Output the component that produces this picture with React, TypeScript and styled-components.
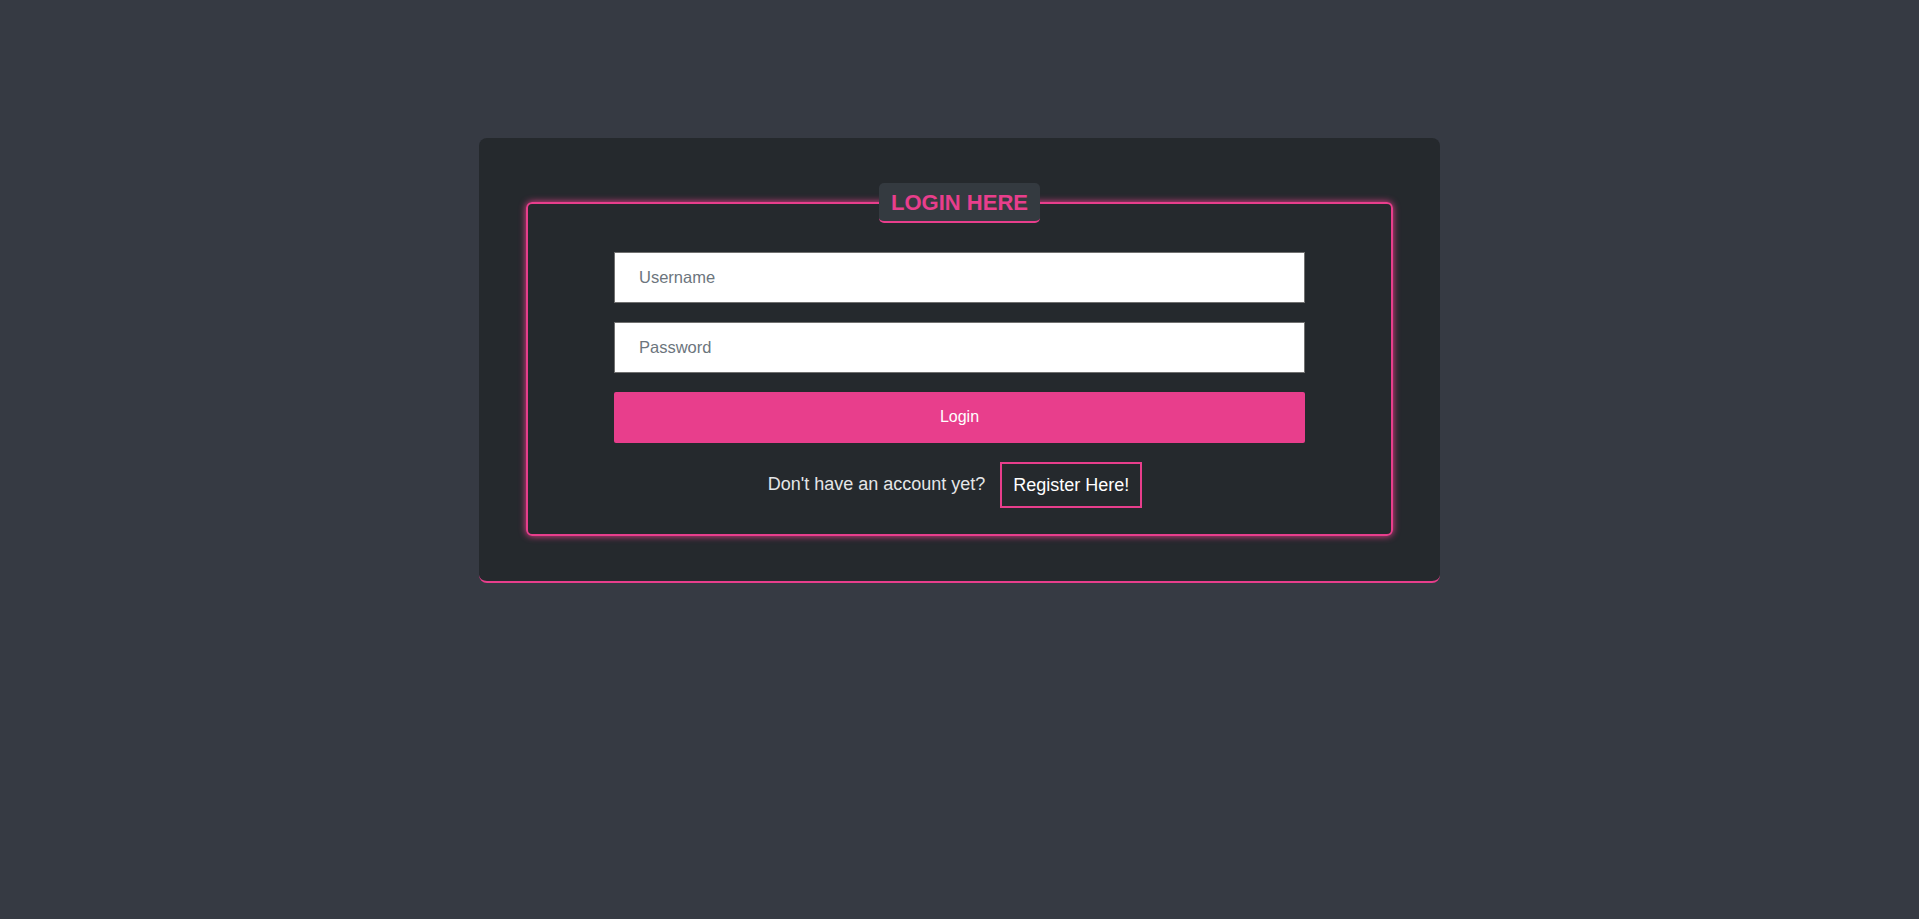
import React from "react";
import styled, { createGlobalStyle } from "styled-components";

const pink = "#e83e8c";

const GlobalStyle = createGlobalStyle`
  html, body {
    margin: 0;
    padding: 0;
    background: #363a43;
    font-family: "Liberation Sans", Arial, sans-serif;
  }
  * {
    box-sizing: border-box;
  }
`;

const Page = styled.main`
  min-height: 100vh;
  padding-top: 15vh;
`;

const Card = styled.section`
  width: 961px;
  margin: 0 auto;
  padding: 45px;
  background: #25292d;
  border-radius: 8px;
  border-bottom: 2px solid ${pink};
`;

const Fieldset = styled.fieldset`
  margin: 0 2px;
  padding: 29px 0 26px;
  border: 2px solid ${pink};
  border-radius: 6px;
  box-shadow: 0 0 7px ${pink};
  min-width: 0;
`;

const Legend = styled.legend`
  margin: 0 auto;
  padding: 7px 12px 6px;
  background: #343a40;
  border-bottom: 2px solid ${pink};
  border-radius: 5px;
  color: ${pink};
  font-size: 22px;
  font-weight: 700;
  line-height: 25px;
`;

const Form = styled.form`
  width: 691px;
  margin: 0 auto;
  display: flex;
  flex-direction: column;
  gap: 19px;
`;

const Input = styled.input`
  height: 51px;
  width: 100%;
  padding: 0 24px;
  border: 1px solid #707070;
  border-radius: 0;
  background: #fff;
  font-family: inherit;
  font-size: 16.5px;
  color: #333;
  outline: none;

  &::placeholder {
    color: #6c757d;
  }
`;

const SubmitButton = styled.button`
  height: 51px;
  width: 100%;
  border: none;
  border-radius: 2px;
  background: ${pink};
  color: #fff;
  font-family: inherit;
  font-size: 16px;
  cursor: pointer;
`;

const RegisterRow = styled.div`
  display: flex;
  align-items: center;
  justify-content: center;
  gap: 15px;
  font-size: 18px;
  color: #e4e6e8;
`;

const RegisterLink = styled.a`
  margin-right: 9px;
  padding: 10px 11px;
  border: 2px solid ${pink};
  color: #fff;
  text-decoration: none;
  line-height: 22px;
`;

export default function App() {
  return (
    <>
      <GlobalStyle />
      <Page>
        <Card>
          <Fieldset>
            <Legend>LOGIN HERE</Legend>
            <Form onSubmit={(e) => e.preventDefault()}>
              <Input type="text" placeholder="Username" />
              <Input type="password" placeholder="Password" />
              <SubmitButton type="submit">Login</SubmitButton>
              <RegisterRow>
                <span>Don't have an account yet?</span>
                <RegisterLink href="#">Register Here!</RegisterLink>
              </RegisterRow>
            </Form>
          </Fieldset>
        </Card>
      </Page>
    </>
  );
}
